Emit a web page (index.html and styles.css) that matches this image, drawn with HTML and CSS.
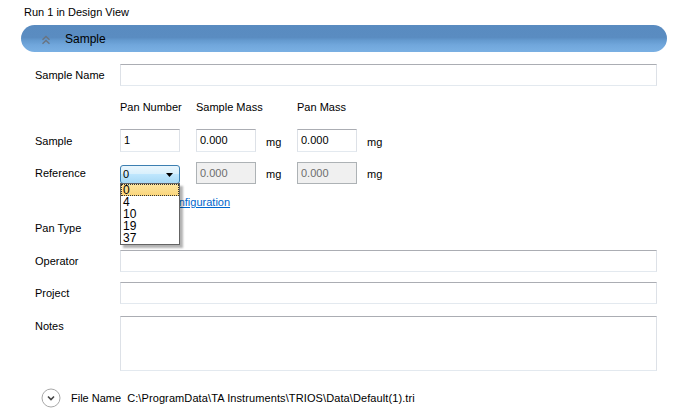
FILE: index.html
```html
<!DOCTYPE html>
<html>
<head>
<meta charset="utf-8">
<link rel="stylesheet" href="styles.css">
</head>
<body>
<div class="page">
  <div class="title">Run 1 in Design View</div>
  <div class="bar">
    <svg class="bar-icon" width="10" height="10" viewBox="0 0 10 10"><path d="M1.5 4.8 L5 1.5 L8.5 4.8 M1.5 8.8 L5 5.5 L8.5 8.8" fill="none" stroke="#6a7480" stroke-width="1.4"/></svg>
    <span class="bar-text">Sample</span>
  </div>
  <div class="form">
    <div class="row r-name">
      <div class="label">Sample Name</div>
      <div class="tb wide"></div>
    </div>
    <div class="grid r-head">
      <div></div>
      <div class="colhead">Pan Number</div>
      <div class="colhead">Sample Mass</div>
      <div class="colhead">Pan Mass</div>
    </div>
    <div class="grid r-sample">
      <div class="label">Sample</div>
      <div class="cell"><div class="tb small">1</div></div>
      <div class="cell"><div class="tb small">0.000</div><span class="unit">mg</span></div>
      <div class="cell"><div class="tb small">0.000</div><span class="unit">mg</span></div>
    </div>
    <div class="grid r-ref">
      <div class="label">Reference</div>
      <div class="cell">
        <div class="combo">
          <span>0</span>
          <svg class="arrow" width="7" height="4" viewBox="0 0 7 4"><path d="M0 0 H7 L3.5 4 Z" fill="#000"/></svg>
          <div class="popup">
            <div class="item sel">0</div>
            <div class="item">4</div>
            <div class="item">10</div>
            <div class="item">19</div>
            <div class="item">37</div>
          </div>
        </div>
      </div>
      <div class="cell"><div class="tb small dis">0.000</div><span class="unit">mg</span></div>
      <div class="cell"><div class="tb small dis">0.000</div><span class="unit">mg</span></div>
    </div>
    <div class="row r-link">
      <div class="label"></div>
      <a class="link">Edit Pan Configuration</a>
    </div>
    <div class="row r-pantype">
      <div class="label">Pan Type</div>
    </div>
    <div class="row r-op">
      <div class="label">Operator</div>
      <div class="tb wide"></div>
    </div>
    <div class="row r-proj">
      <div class="label">Project</div>
      <div class="tb wide"></div>
    </div>
    <div class="row r-notes">
      <div class="label top">Notes</div>
      <div class="tb wide notes"></div>
    </div>
  </div>
  <div class="footer">
    <svg class="circle" width="20" height="20" viewBox="0 0 20 20"><circle cx="10" cy="10" r="9" fill="#fff" stroke="#a8a8a8" stroke-width="1"/><path d="M7 8.5 L10 11.5 L13 8.5" fill="none" stroke="#444" stroke-width="1.6"/></svg>
    <span class="fn-label">File Name</span>
    <span class="fn-path">C:\ProgramData\TA Instruments\TRIOS\Data\Default(1).tri</span>
  </div>
</div>
</body>
</html>
```

FILE: styles.css
```css
html, body {
  margin: 0;
  padding: 0;
  background: #fff;
}
body {
  font-family: "Liberation Sans", Arial, sans-serif;
  font-size: 11px;
  color: #000;
  width: 688px;
  height: 419px;
  overflow: hidden;
}
.page {
  display: flex;
  flex-direction: column;
}
.title {
  height: 24px;
  line-height: 24px;
  padding-left: 24px;
}
.bar {
  margin-top: 1px;
  margin-left: 21px;
  width: 646px;
  height: 27px;
  border-radius: 14px;
  background: linear-gradient(#598bc0 0%, #5a8cc1 46%, #659bd0 58%, #71a7dc 75%, #7ab0e3 100%);
  display: flex;
  align-items: center;
}
.bar-icon {
  margin-left: 20px;
  margin-top: 2px;
}
.bar-text {
  margin-left: 14px;
  font-size: 12px;
  color: #000;
}
.form {
  padding-left: 35px;
  padding-right: 31px;
  display: flex;
  flex-direction: column;
}
.row {
  display: flex;
  align-items: center;
}
.label {
  width: 85px;
  flex: none;
}
.label.top {
  align-self: flex-start;
  margin-top: 4px;
}
.tb {
  box-sizing: border-box;
  height: 22px;
  border: 1px solid #dde1e7;
  border-top-color: #abadb3;
  border-bottom-color: #e3e9ef;
  background: #fff;
  padding: 0 3px;
  line-height: 20px;
}
.tb.wide {
  flex: 1;
}
.tb.small {
  width: 60px;
  height: 23px;
  line-height: 21px;
}
.tb.dis {
  height: 22px;
  background: #f0f0f0;
  border-color: #adb2b5;
  color: #6d6d6d;
}
.r-name { margin-top: 12px; }
.grid {
  display: grid;
  grid-template-columns: 85px 76px 101px auto;
  align-items: center;
}
.cell {
  display: flex;
  align-items: center;
}
.unit {
  margin-left: 10px;
  margin-top: 2px;
}
.r-head {
  margin-top: 10px;
  height: 22px;
}
.r-sample { margin-top: 11px; }
.r-ref {
  margin-top: 10px;
  height: 22px;
}
.combo {
  position: relative;
  box-sizing: border-box;
  width: 60px;
  height: 19px;
  margin-top: 2px;
  border: 1px solid #3c7fb1;
  border-radius: 3px;
  background: linear-gradient(#eaf6fd 0%, #d9f0fc 45%, #bee6fd 50%, #a7d9f5 100%);
  display: flex;
  align-items: center;
  padding-left: 2px;
}
.combo .arrow {
  position: absolute;
  right: 6px;
  top: 7px;
}
.popup {
  position: absolute;
  left: -1px;
  top: 17px;
  width: 60px;
  box-sizing: border-box;
  background: #fff;
  border: 1px solid #646464;
  box-shadow: 3px 3px 2px rgba(0, 0, 0, 0.3);
  z-index: 5;
}
.item {
  height: 12.2px;
  line-height: 12px;
  padding-left: 2px;
  font-size: 12px;
}
.item.sel {
  background: linear-gradient(#fde5a0, #fad57a);
  outline: 1px dotted #333;
  outline-offset: -1px;
}
.r-link {
  margin-top: 10px;
  height: 16px;
}
.link {
  color: #0066cc;
  text-decoration: underline;
}
.r-pantype {
  margin-top: 10px;
  height: 16px;
}
.r-op { margin-top: 14px; }
.r-proj { margin-top: 10px; }
.r-notes { margin-top: 12px; }
.tb.notes { height: 55px; }
.footer {
  margin-top: 17px;
  height: 20px;
  display: flex;
  align-items: center;
  padding-left: 41px;
}
.fn-label {
  margin-left: 10px;
}
.fn-path {
  margin-left: 6px;
  letter-spacing: 0.1px;
}
```
